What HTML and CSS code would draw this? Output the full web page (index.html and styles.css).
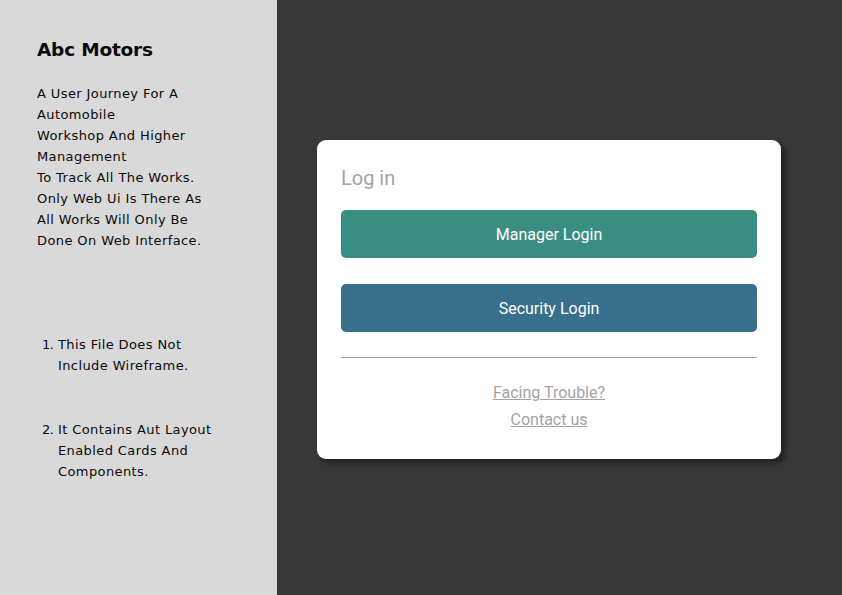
FILE: index.html
```html
<!DOCTYPE html>
<html lang="en">
<head>
<meta charset="utf-8">
<title>Abc Motors</title>
<link rel="stylesheet" href="styles.css">
</head>
<body>
<div class="page">
  <aside class="side">
    <h1 class="title">Abc Motors</h1>
    <p class="intro">A User Journey For A<br>Automobile<br>Workshop And Higher<br>Management<br>To Track All The Works.<br>Only Web Ui Is There As<br>All Works Will Only Be<br>Done On Web Interface.</p>
    <ol class="notes">
      <li>This File Does Not<br>Include Wireframe.</li>
      <li>It Contains Aut Layout<br>Enabled Cards And<br>Components.</li>
    </ol>
  </aside>
  <main class="main">
    <section class="card">
      <h2 class="card-title">Log in</h2>
      <button class="btn btn-manager">Manager Login</button>
      <button class="btn btn-security">Security Login</button>
      <hr class="divider">
      <div class="links">
        <a href="#" class="link">Facing Trouble?</a>
        <a href="#" class="link">Contact us</a>
      </div>
    </section>
  </main>
</div>
</body>
</html>
```
FILE: styles.css
```css
*, *::before, *::after { box-sizing: border-box; }
html, body { margin: 0; padding: 0; }
body { width: 842px; height: 595px; overflow: hidden; }
.page { display: flex; height: 595px; }
.side {
  width: 277px;
  flex: none;
  background: #d9d9d9;
  padding: 39px 0 0 37px;
  font-family: "DejaVu Sans", sans-serif;
  color: #0a0a0a;
}
.title {
  margin: 0;
  font-size: 18.5px;
  font-weight: bold;
  line-height: 22px;
  letter-spacing: -0.2px;
}
.intro {
  margin: 22px 0 0;
  font-size: 13px;
  letter-spacing: 0.4px;
  line-height: 21px;
}
.notes {
  margin: 83px 0 0;
  padding: 0;
  list-style: none;
  counter-reset: note;
  font-size: 13px;
  letter-spacing: 0.4px;
  line-height: 21px;
}
.notes li {
  counter-increment: note;
  display: flex;
  margin-bottom: 43px;
}
.notes li::before {
  content: counter(note) ".";
  flex: none;
  width: 21px;
  padding-left: 5px;
  letter-spacing: -0.5px;
}
.main {
  flex: 1;
  background: #383838;
  padding: 140px 0 0 40px;
}
.card {
  width: 464px;
  height: 319px;
  background: #fff;
  border-radius: 9px;
  box-shadow: 4px 4px 6px rgba(0,0,0,0.45);
  padding: 24px 24px 0;
  display: flex;
  flex-direction: column;
  font-family: Roboto, sans-serif;
}
.card-title {
  margin: 0;
  font-weight: normal;
  font-size: 20px;
  line-height: 28px;
  color: #a3a3a3;
  height: 46px;
}
.btn {
  height: 48px;
  border: none;
  border-radius: 5px;
  color: #fff;
  font-family: Roboto, sans-serif;
  font-size: 16px;
  width: 100%;
  padding: 0;
}
.btn-manager { background: #3a8e81; }
.btn-security { background: #386f8d; margin-top: 26px; }
.divider {
  border: none;
  border-top: 1px solid #a6a6a6;
  margin: 25px 0 0;
  width: 100%;
}
.links {
  display: flex;
  flex-direction: column;
  align-items: center;
  gap: 6px;
  margin-top: 24px;
}
.link {
  color: #a3a3a3;
  font-size: 16px;
  line-height: 21px;
  text-decoration: underline;
}
```
